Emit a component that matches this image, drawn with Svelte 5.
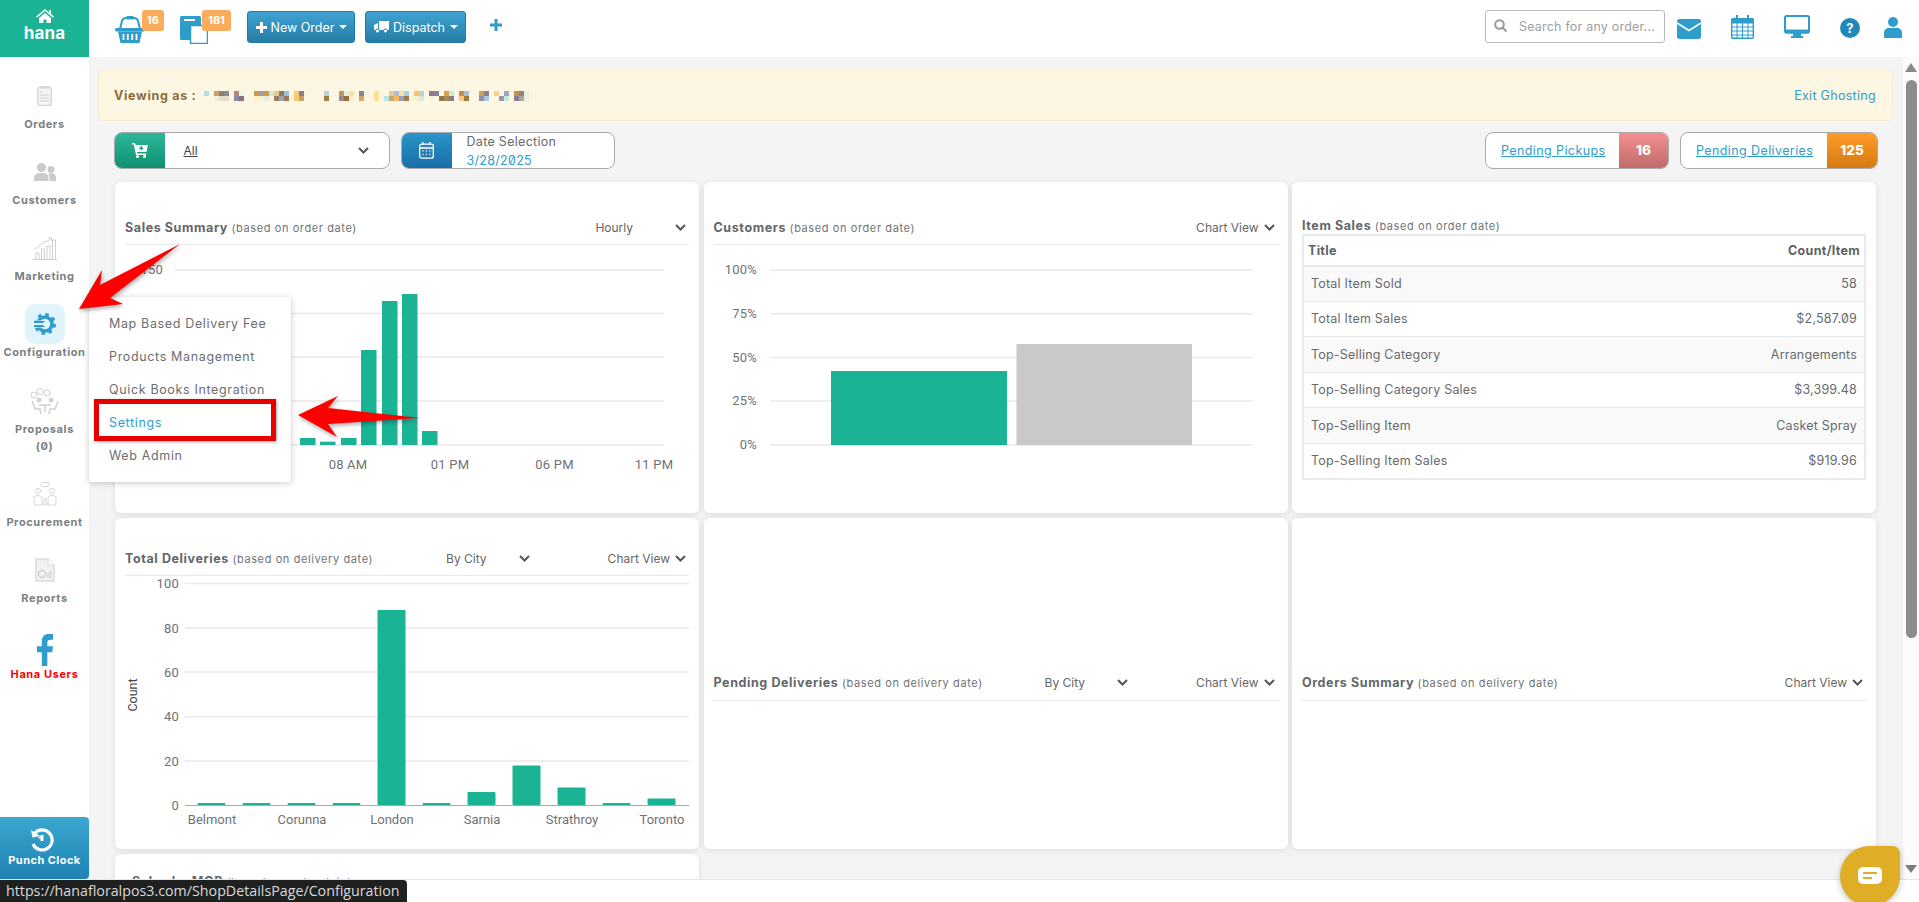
<script>
  const pixelCols = [
    [2,'#b5dde3',''],[4,'#c9a06c','#f6ecd8'],[5,'#8b7d78','#e6dccb'],[6,'#8a8a94','#e6dccb'],
    [8,'#b08a80','#8d8a9e'],[9,'#eaf6e6','#8f6e7e'],
    [12,'#c99a50','#fdf0c4'],[13,'#9a9fb5','#f4f3da'],[14,'#c99a50','#dff1dc'],[15,'#c8e8dc','#fff5e0'],[16,'#e8c98a','#9a7e5e'],[17,'#8f7a64','#95a5c0'],[18,'#a0c0d8','#9a7a50'],
    [20,'#fcc878','#fcc878'],[21,'#8a8088','#c8a060'],[22,'#f5f5e0',''],
    [26,'#b5d5d8','#a07a3a'],
    [29,'#c0985a','#958a90'],[30,'#e8f2dc','#957040'],[31,'#fae0a0','#fdf0c8'],
    [33,'#85858f','#d4a868'],[34,'#f4f5e0',''],
    [36,'#fde098','#fde098'],
    [38,'','#b8e4e4'],[39,'#e8cc90','#c8a868'],[40,'#a8c0e0','#f8b860'],[41,'#fde0a0','#90a0c0'],[42,'#a8d0e0','#a07a48'],[43,'','#fdf2d0'],[44,'#fbc070','#f4f0d0'],[45,'#b0d8e0','#d8e8e0'],
    [47,'#8f7a90','#f4f4e0'],[48,'#8a8098',''],[49,'','#957a40'],[50,'#e0a040','#a88a5a'],[51,'#c8ecdc','#8a7a90'],
    [53,'#c09050','#fcc880'],[54,'#a8c0d8','#a07838'],
    [57,'#c8a060','#9590a0'],[58,'#8f8088','#a8c8e0'],
    [60,'#fcd088',''],[61,'','#9a98b0'],[62,'#98a8c8','#c8ecdc'],
    [64,'#c09050','#888090'],[65,'#9a8078','#a8a898'],[66,'#e8f0e0','#e8f0e0']
  ];
  const pixels = [];
  for (let c = 0; c < 67; c++) {
    const col = pixelCols.find((p) => p[0] === c);
    pixels.push(col ? col[1] || 'transparent' : 'transparent');
    pixels.push(col ? col[2] || 'transparent' : 'transparent');
  }

  const salesBars = [
    [175, 193, 7], [195, 196.7, 3.3], [216, 193, 7], [236, 105, 95], [257, 56, 144], [277, 49, 151], [297, 186, 14]
  ];
  const salesGrid = [25, 68.5, 112, 156, 200];
  const salesLabels = [[223, '08 AM'], [325, '01 PM'], [429.5, '06 PM'], [529, '11 PM']];

  const custGrid = [[25, '100%'], [68.7, '75%'], [112.5, '50%'], [156, '25%'], [200, '0%']];

  const delGrid = [[7.5, '100'], [52, '80'], [96, '60'], [140.7, '40'], [185, '20'], [229.5, '0']];
  const delHeights = [2, 2, 2, 2, 195, 2, 13, 39.5, 17.5, 2, 6.5];
  const delLabels = [[87, 'Belmont'], [177, 'Corunna'], [267, 'London'], [357, 'Sarnia'], [447, 'Strathroy'], [537, 'Toronto']];

  const rows = [
    ['Total Item Sold', '58'],
    ['Total Item Sales', '$2,587.09'],
    ['Top-Selling Category', 'Arrangements'],
    ['Top-Selling Category Sales', '$3,399.48'],
    ['Top-Selling Item', 'Casket Spray'],
    ['Top-Selling Item Sales', '$919.96']
  ];
  const menu = ['Map Based Delivery Fee', 'Products Management', 'Quick Books Integration', 'Settings', 'Web Admin'];
</script>

{#snippet chev()}
  <svg class="chev" width="11" height="7" viewBox="0 0 11 7"><path d="M1 1l4.5 4.5L10 1" fill="none" stroke="#555" stroke-width="2"/></svg>
{/snippet}

<div class="page">
  <div class="top">
    <aside class="side">
      <div class="logo">
        <svg width="18" height="14" viewBox="0 0 18 14"><path d="M9 0L0 7.5l1 1.2L9 2l8 6.7 1-1.200-3-2.500V1h-2v2.600zM3 9v5h4.500v-3.500h3V14H15V9L9 4z" fill="#fff"/></svg>
        <span>hana</span>
      </div>
      <nav class="nav">
        <div class="item">
          <div class="ibox"><svg width="15" height="20" viewBox="0 0 15 20"><rect x=".7" y="1.500" width="13.600" height="18" rx="1.500" fill="#f4f4f4" stroke="#d8d8d8" stroke-width="1.400"/><rect x="3" y="0" width="9" height="2.500" fill="#d8d8d8"/><path d="M3 6h3M3 9h9M3 12h9M3 15h9" stroke="#d0d0d0"/></svg></div>
          <div class="lab">Orders</div>
        </div>
        <div class="item">
          <div class="ibox"><svg width="22" height="18" viewBox="0 0 22 18"><circle cx="7.500" cy="4.500" r="4.500" fill="#cbcbcb"/><circle cx="17" cy="6.500" r="3.500" fill="#cbcbcb"/><path d="M0 18v-3c0-3 2.500-5 7.500-5s7 2 7 5v3z" fill="#cbcbcb"/><path d="M15.500 18v-3c0-2-.6-3-1.500-4 1-.6 2-.8 3-.8 3 0 5 1.500 5 4V18z" fill="#cbcbcb"/></svg></div>
          <div class="lab">Customers</div>
        </div>
        <div class="item">
          <div class="ibox"><svg width="24" height="23" viewBox="0 0 24 23" fill="none" stroke="#cfcfcf"><path d="M0 22.500h24M3 22v-6h3v6M8.500 22V12h3v10M14 22V9h3v13M19.500 22V3h3v19"/><path d="M1 13L11 5l4-1 3-3M15 1h3.500v3"/></svg></div>
          <div class="lab">Marketing</div>
        </div>
        <div class="item">
          <div class="ibox tile"><svg width="22" height="22" viewBox="0 0 22 22"><circle cx="11" cy="11" r="7" fill="none" stroke="#2e9dcc" stroke-width="3.600"/><circle cx="11" cy="11" r="9.500" fill="none" stroke="#2e9dcc" stroke-width="3" stroke-dasharray="3.500 3.960"/><rect x="0" y="7.500" width="12" height="7" fill="#e1f3fb"/><path d="M0 9h11M0 13h11" stroke="#2e9dcc" stroke-width="2"/><circle cx="11.500" cy="11" r="2.500" fill="#e1f3fb"/></svg></div>
          <div class="lab">Configuration</div>
        </div>
        <div class="item nudge">
          <div class="ibox"><svg width="30" height="26" viewBox="0 0 30 26" fill="none" stroke="#d0d0d0"><circle cx="4" cy="7" r="3"/><circle cx="10" cy="3.500" r="3"/><circle cx="17" cy="5" r="3"/><circle cx="9" cy="12" r="2" fill="#d0d0d0"/><circle cx="21" cy="12" r="2" fill="#d0d0d0"/><path d="M2 13l3 8h5l1 5M28 13l-3 8h-5l-1 5M9 17h12M15 17v7" stroke-width="1.500"/></svg></div>
          <div class="lab">Proposals</div>
          <div class="lab">(0)</div>
        </div>
        <div class="item">
          <div class="ibox"><svg width="24" height="24" viewBox="0 0 24 24" fill="none" stroke="#d8d8d8"><rect x="8" y=".5" width="8" height="4" rx="1"/><circle cx="5" cy="9" r="2.500"/><circle cx="19" cy="9" r="2.500"/><path d="M1 23v-8l4-2 4 2v8zM15 23v-8l4-2 4 2v8zM10 23l2-7 2 7z"/></svg></div>
          <div class="lab">Procurement</div>
        </div>
        <div class="item">
          <div class="ibox"><svg width="20" height="24" viewBox="0 0 20 24"><path d="M1 1h12l6 6v16H1z" fill="#f2f2f2" stroke="#dcdcdc" stroke-width="1.500"/><path d="M13 1v6h6" fill="#fff" stroke="#dcdcdc"/><circle cx="7" cy="16" r="3.500" fill="none" stroke="#d0d0d0" stroke-width="1.500"/><path d="M13 20v-5M15.500 20v-7" stroke="#d0d0d0" stroke-width="1.500"/></svg></div>
          <div class="lab">Reports</div>
        </div>
        <div class="item">
          <div class="ibox fb"><svg width="16" height="32" viewBox="0 0 15 30"><path d="M4.500 30V17H0v-5.500h4.500V7c0-4.500 2.500-7 6.500-7h4v5.500h-2.500c-2 0-2.800.8-2.800 2.500v3.500H15l-.8 5.500h-4.500V30z" fill="#2e9dcc"/></svg></div>
          <div class="lab red">Hana Users</div>
        </div>
      </nav>
      <div class="punch">
        <svg width="24" height="24" viewBox="0 0 24 24" fill="none" stroke="#fff" stroke-width="3.200"><path d="M4.500 5.500A10 10 0 1 1 3 16"/><path d="M1 2l1.500 7.500L10 8" fill="#fff" stroke="none"/><path d="M12 7v6" stroke-width="3"/><path d="M8.500 9.500H12" stroke-width="2"/></svg>
        <span>Punch Clock</span>
      </div>
    </aside>

    <div class="right">
      <header class="head">
        <div class="hicon basket">
          <svg width="30" height="27" viewBox="0 0 30 27"><path d="M5 13L7 5q1-3 4-3h8q3 0 4 3l2 8" fill="none" stroke="#2e9dcc" stroke-width="2"/><rect x="11" y="0" width="8" height="3.500" rx="1.500" fill="#2e9dcc"/><rect x="0" y="12" width="30" height="3.500" rx="1.500" fill="#2e9dcc"/><path d="M3 15.500h24L24.500 27h-19z" fill="#2e9dcc"/><path d="M8.500 18v6M12.800 18v6M17.200 18v6M21.500 18v6" stroke="#fff" stroke-width="1.800"/></svg>
          <span class="badge b1">16</span>
        </div>
        <div class="hicon copies">
          <svg width="28" height="28" viewBox="0 0 28 28"><rect x="0" y="0" width="21" height="24" rx="1.500" fill="#2e9dcc"/><rect x="4" y="3" width="11" height="2" fill="#fff"/><rect x="10.500" y="9.500" width="17" height="18" fill="#fff" stroke="#2e9dcc" stroke-width="1.500"/></svg>
          <span class="badge b2">181</span>
        </div>
        <button class="btn bnew"><svg width="11" height="11" viewBox="0 0 11 11"><path d="M4 0h3v4h4v3H7v4H4V7H0V4h4z" fill="#fff"/></svg>New Order<i class="caret"></i></button>
        <button class="btn bdis"><svg width="15" height="12" viewBox="0 0 15 12"><path d="M5 0h10v9H5zM0 4l4-2v7H0z" fill="#fff"/><circle cx="3.500" cy="10" r="2" fill="#fff" stroke="#2a86b4"/><circle cx="11.500" cy="10" r="2" fill="#fff" stroke="#2a86b4"/></svg>Dispatch<i class="caret"></i></button>
        <svg class="plus" width="12" height="12" viewBox="0 0 12 12"><path d="M4.500 0h3v4.500H12v3H7.500V12h-3V7.500H0v-3h4.500z" fill="#2e9dcc"/></svg>
        <div class="grow"></div>
        <div class="search">
          <svg width="13" height="13" viewBox="0 0 13 13" fill="none" stroke="#999" stroke-width="2"><circle cx="5.500" cy="5.500" r="4.300"/><path d="M8.500 8.500l4 4"/></svg>
          <span>Search for any order...</span>
        </div>
        <svg class="tool mail" width="24" height="20" viewBox="0 0 24 20"><rect width="24" height="20" rx="2.500" fill="#2e9dcc"/><path d="M0 4l12 7.500L24 4" fill="none" stroke="#fff" stroke-width="1.600"/></svg>
        <svg class="tool cal" width="23" height="24" viewBox="0 0 23 24" fill="none" stroke="#2e9dcc"><rect x=".7" y="3.700" width="21.600" height="19.600" rx="1" stroke-width="1.400"/><rect x="1" y="4" width="21" height="4" fill="#2e9dcc"/><path d="M1 12h21M1 16h21M1 20h21M6 8v15M11.500 8v15M17 8v15"/><path d="M6 0v5M17 0v5" stroke-width="2"/></svg>
        <svg class="tool mon" width="26" height="23" viewBox="0 0 26 23"><rect x="1" y="1" width="24" height="16.500" rx="1.500" fill="#fff" stroke="#2e9dcc" stroke-width="2"/><rect x="1" y="14.500" width="24" height="4" fill="#2e9dcc"/><path d="M9 18h8v3h-8z" fill="#2e9dcc"/><rect x="7" y="21" width="12" height="2" fill="#2e9dcc"/></svg>
        <div class="tool help">?</div>
        <svg class="tool user" width="18" height="21" viewBox="0 0 18 21"><circle cx="9" cy="5" r="5" fill="#2e9dcc"/><path d="M0 21v-5c0-3 2-5 5-5h8c3 0 5 2 5 5v5z" fill="#2e9dcc"/></svg>
      </header>

      <div class="below">
        <main class="main">
          <div class="banner">
            <b>Viewing as :</b>
            <div class="pix">{#each pixels as color}<i style="background:{color}"></i>{/each}</div>
            <span class="exit">Exit Ghosting</span>
          </div>

          <div class="filters">
            <div class="fbox fsel">
              <div class="fic green">
                <svg width="16" height="15" viewBox="0 0 16 15"><path d="M0 0h3l.6 2H16l-1.500 7H5l.4 1.500H14V12H4L1.800 1.600H0z" fill="#fff"/><circle cx="5.500" cy="13.500" r="1.500" fill="#fff"/><circle cx="12.500" cy="13.500" r="1.500" fill="#fff"/><path d="M9.300 3.200v4M7.300 5.200h4" stroke="#1aa585" stroke-width="1.400"/></svg>
              </div>
              <span class="all">All</span>
              {@render chev()}
            </div>
            <div class="fbox fdate">
              <div class="fic blue">
                <svg width="15" height="17" viewBox="0 0 15 17" fill="none" stroke="#fff" stroke-width="1.300"><rect x=".7" y="2.200" width="13.600" height="14" rx="2"/><path d="M1 6h13M4 0v3M11 0v3"/><path d="M3.500 9h1M7 9h1M10.500 9h1M3.500 12.500h1M7 12.500h1M10.500 12.500h1"/></svg>
              </div>
              <div class="dtext"><span>Date Selection</span><span class="dval">3/28/2025</span></div>
            </div>
            <div class="grow"></div>
            <div class="fbox pend pp"><a href="#p">Pending Pickups</a><b class="cnt redc">16</b></div>
            <div class="fbox pend pd"><a href="#d">Pending Deliveries</a><b class="cnt orc">125</b></div>
          </div>

          <div class="grid">
            <section class="card">
              <div class="chead">
                <span class="ttl"><b>Sales Summary</b> <small>(based on order date)</small></span>
                <span class="opt hourly">Hourly</span>{@render chev()}
              </div>
              <svg class="chart" width="564" height="239" viewBox="0 0 564 239">
                {#each salesGrid as y}<line x1="50" x2="539" y1={y} y2={y} class="gl"/>{/each}
                <text x="38" y="29" text-anchor="end" class="tx">150</text>
                {#each salesBars as b}<rect x={b[0]} y={b[1]} width="15.500" height={b[2]} class="bar"/>{/each}
                {#each salesLabels as l}<text x={l[0]} y="224" text-anchor="middle" class="tx">{l[1]}</text>{/each}
              </svg>
            </section>

            <section class="card">
              <div class="chead">
                <span class="ttl"><b>Customers</b> <small>(based on order date)</small></span>
                <span class="opt">Chart View</span>{@render chev()}
              </div>
              <svg class="chart" width="564" height="239" viewBox="0 0 564 239">
                {#each custGrid as g}
                  <line x1="56" x2="539" y1={g[0]} y2={g[0]} class="gl"/>
                  <text x="43" y={g[0] + 4} text-anchor="end" class="tx">{g[1]}</text>
                {/each}
                <rect x="117" y="126" width="176" height="74" class="bar"/>
                <rect x="302.500" y="99" width="175.500" height="101" fill="#c9c9c9"/>
              </svg>
            </section>

            <section class="card">
              <div class="ist"><b>Item Sales</b> <small>(based on order date)</small></div>
              <table class="tbl">
                <thead><tr><th>Title</th><th class="r">Count/Item</th></tr></thead>
                <tbody>
                  {#each rows as row}
                    <tr><td>{row[0]}</td><td class="r">{row[1]}</td></tr>
                  {/each}
                </tbody>
              </table>
            </section>

            <section class="card">
              <div class="chead">
                <span class="ttl"><b>Total Deliveries</b> <small>(based on delivery date)</small></span>
                <span class="opt city">By City</span>{@render chev()}
                <span class="opt cv">Chart View</span>{@render chev()}
              </div>
              <svg class="chart tall" width="564" height="255" viewBox="0 0 564 255">
                {#each delGrid as g}
                  <line x1="60" x2="564" y1={g[0]} y2={g[0]} class={g[1] === '0' ? 'axis' : 'gl'}/>
                  <text x="54" y={g[0] + 4.500} text-anchor="end" class="tx">{g[1]}</text>
                {/each}
                {#each delHeights as h, i}
                  <rect x={72.5 + i * 45} y={229 - h} width="28" height={h} rx="1" class="bar"/>
                {/each}
                {#each delLabels as l}<text x={l[0]} y="248" text-anchor="middle" class="tx cat">{l[1]}</text>{/each}
                <text transform="translate(12 119) rotate(-90)" text-anchor="middle" class="cnt-l">Count</text>
              </svg>
            </section>

            <section class="card">
              <div class="chead">
                <span class="ttl"><b>Pending Deliveries</b> <small>(based on delivery date)</small></span>
                <span class="opt city">By City</span>{@render chev()}
                <span class="opt cv2">Chart View</span>{@render chev()}
              </div>
            </section>

            <section class="card">
              <div class="chead">
                <span class="ttl"><b>Orders Summary</b> <small>(based on delivery date)</small></span>
                <span class="opt">Chart View</span>{@render chev()}
              </div>
            </section>

            <section class="card cut">
              <span class="ttl"><b>Sales by MOP</b> <small>(based on order date)</small></span>
            </section>
          </div>
        </main>

        <div class="scroll">
          <i class="up"></i>
          <i class="thumb"></i>
          <i class="down"></i>
        </div>
      </div>
    </div>
  </div>

  <footer class="foot">
    <div class="status">https://hanafloralpos3.com/ShopDetailsPage/Configuration</div>
  </footer>

  <div class="menu">
    {#each menu as m}
      <div class="mi" class:act={m === 'Settings'}>{m}</div>
    {/each}
  </div>

  <div class="redbox"></div>
  <svg class="arrows" width="440" height="460" viewBox="0 0 440 460">
    <path d="M79 309L102 270L100 285L180 244L110 298L123 304Z" fill="#f00"/>
    <path d="M298 415L338 396L328 408L420 418L328 424L337 437Z" fill="#f00"/>
  </svg>

  <div class="chat">
    <svg width="24" height="18" viewBox="0 0 24 18"><rect width="24" height="17" rx="5" fill="#fff"/><path d="M5 6h14M5 11h9" stroke="#dfae26" stroke-width="2"/></svg>
  </div>
</div>

<style>
  :global(body) { margin: 0; }
  .page {
    position: relative;
    width: 1919px;
    height: 902px;
    overflow: hidden;
    display: flex;
    flex-direction: column;
    font-family: Inter, "Liberation Sans", sans-serif;
    font-feature-settings: "zero";
    color: #676a6c;
    background: #fff;
  }
  .top { flex: 1; display: flex; min-height: 0; }
  .side {
    width: 89px;
    flex: none;
    display: flex;
    flex-direction: column;
    background: #fff;
  }
  .logo {
    height: 57px;
    background: #1ab394;
    color: #fff;
    display: flex;
    flex-direction: column;
    align-items: center;
    padding-top: 9px;
    box-sizing: border-box;
    font-weight: 700;
    font-size: 17px;
    line-height: 21px;
    letter-spacing: .2px;
  }
  .nav { flex: 1; }
  .item { padding-top: 19px; text-align: center; }
  .nudge { margin-top: 1px; }
  .ibox { height: 40px; display: flex; align-items: center; justify-content: center; }
  .fb { align-items: flex-end; padding-top: 2px; box-sizing: border-box; }
  .tile { width: 40px; margin-left: 25px; background: #e1f3fb; border-radius: 10px; }
  .lab { font-size: 11px; line-height: 17px; font-weight: 700; color: #7b7f83; white-space: nowrap; letter-spacing: .6px; }
  .red { color: #f00; }
  .punch {
    height: 62px;
    background: linear-gradient(#3aa8cf, #1f82b4);
    border-radius: 0 4px 4px 0;
    display: flex;
    flex-direction: column;
    align-items: center;
    color: #fff;
    font-size: 11px;
    font-weight: 700;
    letter-spacing: .45px;
    padding-top: 11px;
    box-sizing: border-box;
    gap: 1px;
  }
  .punch svg { margin-left: -5px; }
  .right { flex: 1; min-width: 0; display: flex; flex-direction: column; }
  .head {
    height: 57px;
    flex: none;
    display: flex;
    align-items: center;
    padding: 0 17px 0 26px;
    background: #fff;
    box-sizing: border-box;
  }
  .hicon { position: relative; height: 28px; margin-top: 3px; }
  .basket { width: 30px; margin-right: 35px; }
  .copies { width: 28px; margin-right: 39px; }
  .badge {
    position: absolute;
    top: -6px;
    height: 21px;
    background: #f9ad5c;
    color: #fff;
    font-size: 11px;
    font-weight: 700;
    line-height: 20px;
    text-align: center;
    border-radius: 3px;
  }
  .b1 { left: 27px; width: 22px; }
  .b2 { left: 22px; width: 29px; }
  .btn {
    height: 32px;
    margin-top: -3px;
    border: 1px solid #1f7ba8;
    border-radius: 3px;
    background: linear-gradient(#3fa3d3, #267ca5);
    color: #fff;
    font: 400 12.5px Inter, sans-serif;
    display: flex;
    align-items: center;
    justify-content: center;
    gap: 4px;
    padding: 0 0 0 1px;
  }
  .bnew { width: 108px; margin-right: 10px; }
  .bdis { width: 101px; margin-right: 24px; }
  .caret { width: 0; height: 0; border: 4px solid transparent; border-top-color: #fff; border-bottom: 0; margin-left: 1px; }
  .plus { margin-top: -7px; }
  .grow { flex: 1; }
  .search {
    width: 180px;
    height: 33px;
    box-sizing: border-box;
    border: 1px solid #bbb;
    border-radius: 3px;
    margin-top: -4px;
    margin-right: 12px;
    display: flex;
    align-items: center;
    padding-left: 8px;
    gap: 12px;
    font-size: 12.5px;
    letter-spacing: .2px;
    color: #a0a0a0;
    white-space: nowrap;
  }
  .search svg { margin-top: -3px; }
  .tool { flex: none; }
  .mail { margin-right: 30px; margin-top: 1px; }
  .cal { margin-right: 30px; margin-top: -3px; }
  .mon { margin-right: 30px; margin-top: -4px; }
  .help {
    width: 20px;
    height: 20px;
    border-radius: 50%;
    background: #2187b8;
    color: #fff;
    font-size: 13px;
    font-weight: 700;
    line-height: 20px;
    text-align: center;
    margin-right: 24px;
    margin-top: -1px;
  }
  .user { margin-top: -2px; }

  .below { flex: 1; display: flex; min-height: 0; }
  .main { flex: 1; min-width: 0; overflow: hidden; background: #f4f4f4; padding: 13px 10px 0 9px; box-sizing: border-box; }
  .banner {
    height: 51px;
    box-sizing: border-box;
    background: #fcf6e3;
    border: 1px solid #faebcc;
    border-radius: 4px;
    display: flex;
    align-items: center;
    padding: 0 16px 0 15px;
    font-size: 12.5px;
    color: #8a6d3b;
  }
  .banner b { letter-spacing: .7px; width: 77px; flex: none; white-space: nowrap; }
  .pix {
    display: grid;
    grid-template-rows: 5px 5px;
    grid-auto-columns: 5px;
    grid-auto-flow: column;
    margin-left: 3px;
  }
  .exit { margin-left: auto; color: #2e9dcc; letter-spacing: .3px; }
  .filters { display: flex; height: 37px; margin: 11px 15px 0 15.500px; gap: 11px; }
  .fbox {
    height: 37px;
    box-sizing: border-box;
    background: #fff;
    border: 1px solid #aaa;
    border-radius: 8px;
    display: flex;
    align-items: center;
    overflow: hidden;
  }
  .fsel { width: 276px; }
  .fdate { width: 214px; }
  .fic { width: 50px; height: 100%; flex: none; display: flex; align-items: center; justify-content: center; }
  .green { background: linear-gradient(#2db898, #119073); }
  .blue { background: linear-gradient(#2a94c8, #1a6fa8); }
  .all { margin-left: 19px; font-size: 12px; text-decoration: underline; color: #444; flex: 1; }
  .fsel .chev { margin-right: 20px; }
  .dtext { display: flex; flex-direction: column; margin-left: 15px; font-size: 12.5px; line-height: 19px; letter-spacing: .3px; }
  .dval { color: #2e9dcc; }
  .pend { font-size: 12.5px; letter-spacing: .4px; }
  .pend a { color: #2e9dcc; flex: 1; padding-left: 15px; }
  .pp { width: 184px; }
  .pd { width: 198px; }
  .cnt { height: 100%; flex: none; color: #fff; font-size: 13.5px; font-weight: 800; text-align: center; line-height: 35px; letter-spacing: 0; }
  .redc { width: 49px; background: linear-gradient(#f48f8f, #bf6b6b); }
  .orc { width: 50px; background: linear-gradient(#ff9c28, #d57a12); }
  .grid {
    display: grid;
    grid-template-columns: repeat(3, 584px);
    grid-auto-rows: 331px;
    gap: 5px 4.500px;
    margin: 13px 0 0 17px;
  }
  .card {
    background: #fff;
    border-radius: 6px;
    box-shadow: 0 1px 6px rgba(0, 0, 0, .1);
    padding: 0 10px;
    display: flex;
    flex-direction: column;
    justify-content: center;
    box-sizing: border-box;
  }
  .chead {
    height: 34px;
    flex: none;
    display: flex;
    align-items: center;
    border-bottom: 1px solid #e7eaec;
    box-sizing: border-box;
    padding-bottom: 1px;
    font-size: 12px;
  }
  .ttl { flex: 1; white-space: nowrap; font-size: 12.5px; }
  .ttl b { letter-spacing: .6px; color: #636669; }
  small { font-size: 11px; letter-spacing: .6px; color: #707375; font-weight: 400; }
  .opt { color: #666; font-size: 12px; margin-right: 5px; }
  .chev { flex: none; margin-right: 3px; }
  .hourly { margin-right: 42px; }
  .city { margin-right: 32px; }
  .cv { margin-left: 75px; }
  .cv2 { margin-left: 65px; }
  .chart { display: block; flex: none; }
  .tall { margin-bottom: -6px; }
  .gl { stroke: #e9e9e9; stroke-width: 1.500; }
  .axis { stroke: #aaa; stroke-width: 1; }
  .tx { font: 13px Roboto, sans-serif; fill: #6f7275; font-feature-settings: normal; letter-spacing: .2px; }
  .cat { letter-spacing: 0; }
  .cnt-l { font: 12.5px Roboto, sans-serif; fill: #444; }
  .bar { fill: #1ab394; }
  .ist { font-size: 12.5px; line-height: 20px; margin-bottom: -2px; }
  .ist b { color: #636669; letter-spacing: .6px; }
  .tbl {
    border-collapse: collapse;
    width: 100%;
    border: 2px solid #e7eaec;
    font-size: 12.5px;
    letter-spacing: .2px;
  }
  .tbl th { height: 29px; padding: 0 4px; text-align: left; font-weight: 700; color: #5f6264; border-bottom: 2px solid #e7eaec; letter-spacing: .3px; }
  .tbl td { height: 35.500px; padding: 0 7px; border-top: 1px solid #e7eaec; box-sizing: border-box; }
  .tbl tbody tr:nth-child(odd) { background: #f9f9f9; }
  .tbl .r { text-align: right; }
  .cut { display: block; padding: 16px 0 0 17px; }

  .scroll { width: 16px; flex: none; background: #fbfbfb; display: flex; flex-direction: column; align-items: center; position: relative; }
  .up { margin-top: 6px; width: 0; height: 0; border: 6.500px solid transparent; border-top: 0; border-bottom: 9px solid #888; }
  .thumb { margin-top: 8px; width: 11px; height: 558px; border-radius: 6px; background: #8c8c8c; }
  .down { margin-top: auto; margin-bottom: 6px; width: 0; height: 0; border: 6.500px solid transparent; border-bottom: 0; border-top: 8px solid #7d7d7d; }

  .foot { height: 23px; flex: none; border-top: 1px solid #e6e6e6; box-sizing: border-box; background: #fff; position: relative; }
  .status {
    position: absolute;
    left: 0;
    bottom: 0;
    width: 407px;
    height: 22px;
    box-sizing: border-box;
    background: #1f2121;
    color: #d9d9d9;
    font: 14.250px/22px "Open Sans", sans-serif;
    font-feature-settings: normal;
    padding-left: 6px;
    border-radius: 0 4px 0 0;
    white-space: nowrap;
    overflow: hidden;
  }
  .menu {
    position: absolute;
    left: 89px;
    top: 297px;
    width: 202px;
    height: 185px;
    box-sizing: border-box;
    background: #fff;
    border-radius: 3px;
    box-shadow: 0 1px 6px rgba(0, 0, 0, .22);
    padding: 10px 0 0 20px;
    font-size: 12.5px;
    letter-spacing: .65px;
    white-space: nowrap;
  }
  .mi { height: 33px; line-height: 33px; color: #6b6e70; }
  .act { color: #2e9dcc; }
  .redbox {
    position: absolute;
    left: 94px;
    top: 399px;
    width: 182px;
    height: 42px;
    box-sizing: border-box;
    border: 5px solid #e60000;
    box-shadow: 1px 1px 3px rgba(0, 0, 0, .35);
  }
  .arrows { position: absolute; left: 0; top: 0; filter: drop-shadow(1px 2px 2px rgba(0, 0, 0, .35)); pointer-events: none; }
  .chat {
    position: absolute;
    left: 1840px;
    top: 846px;
    width: 60px;
    height: 60px;
    background: #dfae26;
    border-radius: 50% 8px 50% 50%;
    box-shadow: 0 2px 6px rgba(0, 0, 0, .25);
    display: flex;
    align-items: center;
    justify-content: center;
  }
</style>
